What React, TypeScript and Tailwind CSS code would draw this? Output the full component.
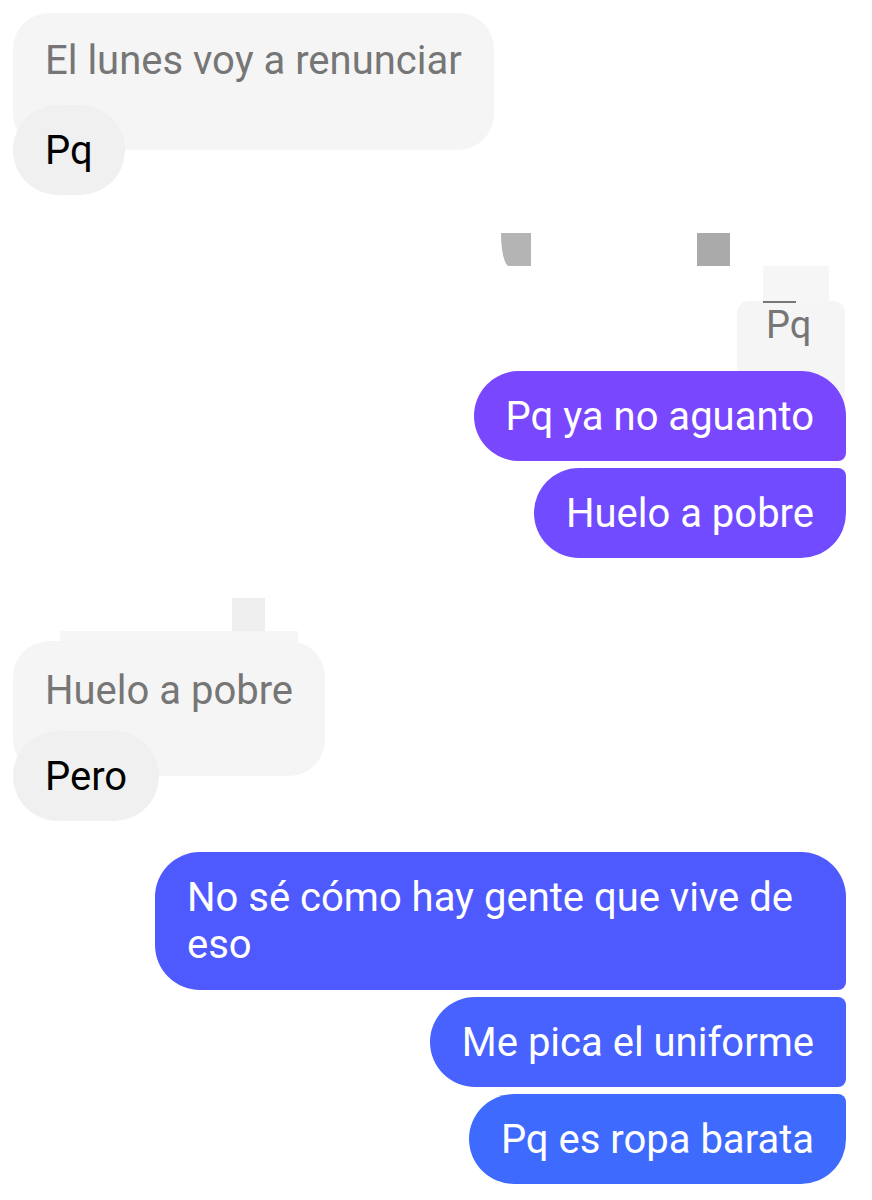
import React from "react";

const Bubble = ({
  children,
  className = "",
}: {
  children: React.ReactNode;
  className?: string;
}) => (
  <div
    className={`px-[32px] pt-[22px] pb-[21px] text-[40px] leading-[47px] text-white ${className}`}
  >
    {children}
  </div>
);

const QuoteLeft = ({ quote, reply, pt, pb }: { quote: string; reply: string; pt: string; pb: string }) => (
  <div className="flex flex-col items-start">
    <div className={`rounded-[36px] bg-[#f5f5f5] px-[32px] ${pt} ${pb} text-[40px] leading-[47px] text-[#767676]`}>
      {quote}
    </div>
    <div className="-mt-[45px] rounded-[45px] bg-[#f0f0f0] px-[32px] pt-[22px] pb-[21px] text-[40px] leading-[47px] text-black">
      {reply}
    </div>
  </div>
);

export default function App() {
  return (
    <div
      className="min-h-[1200px] bg-white pl-[13px] pr-[26px] pt-[13px]"
      style={{ fontFamily: "Roboto, 'Noto Sans', sans-serif" }}
    >
      {/* first incoming reply */}
      <QuoteLeft quote="El lunes voy a renunciar" reply="Pq" pt="pt-[24px]" pb="pb-[66px]" />

      {/* glitchy reply header */}
      <div className="mt-[38px] flex justify-end gap-[166px] pr-[116px]">
        <div className="h-[33px] w-[30px] rounded-bl-[8px_33px] bg-[#b4b4b4]"></div>
        <div className="h-[33px] w-[33px] bg-[#aaaaaa]"></div>
      </div>
      <div className="flex justify-end pr-[17px]">
        <div className="h-[35px] w-[66px] bg-[#f6f6f6]"></div>
      </div>

      {/* outgoing group */}
      <div className="flex flex-col items-end">
        <div className="mr-[1px] h-[115px] w-[108px] rounded-[12px] bg-[#f5f5f5] pl-[29px]">
          <div className="-ml-[3px] h-[2px] w-[33px] bg-[#777777]"></div>
          <div className="pt-[1px] text-[38px] leading-[43px] text-[#767676]">Pq</div>
        </div>
        <div className="-mt-[45px] flex flex-col items-end gap-[7px]">
          <Bubble className="rounded-l-[45px] rounded-tr-[45px] rounded-br-[8px] bg-[#7947fe]">Pq ya no aguanto</Bubble>
          <Bubble className="rounded-l-[45px] rounded-tr-[8px] rounded-br-[45px] bg-[#714bff]">Huelo a pobre</Bubble>
        </div>
      </div>

      {/* second incoming reply */}
      <div className="mt-[40px] ml-[219px] h-[33px] w-[33px] bg-[#efefef]"></div>
      <div className="ml-[47px] h-[12px] w-[238px] bg-[#f6f6f6]"></div>
      <div className="-mt-[2px]">
        <QuoteLeft quote="Huelo a pobre" reply="Pero" pt="pt-[26px]" pb="pb-[62px]" />
      </div>

      {/* outgoing blue group */}
      <div className="mt-[31px] flex flex-col items-end gap-[7px]">
        <Bubble className="max-w-[691px] rounded-[45px] rounded-br-[8px] !pb-[22px] bg-[#4e5afd]">
          No sé cómo hay gente que vive de eso
        </Bubble>
        <Bubble className="rounded-l-[45px] rounded-r-[8px] bg-[#4762fe]">Me pica el uniforme</Bubble>
        <Bubble className="rounded-l-[45px] rounded-tr-[8px] rounded-br-[45px] bg-[#3f6afe]">Pq es ropa barata</Bubble>
      </div>
    </div>
  );
}
